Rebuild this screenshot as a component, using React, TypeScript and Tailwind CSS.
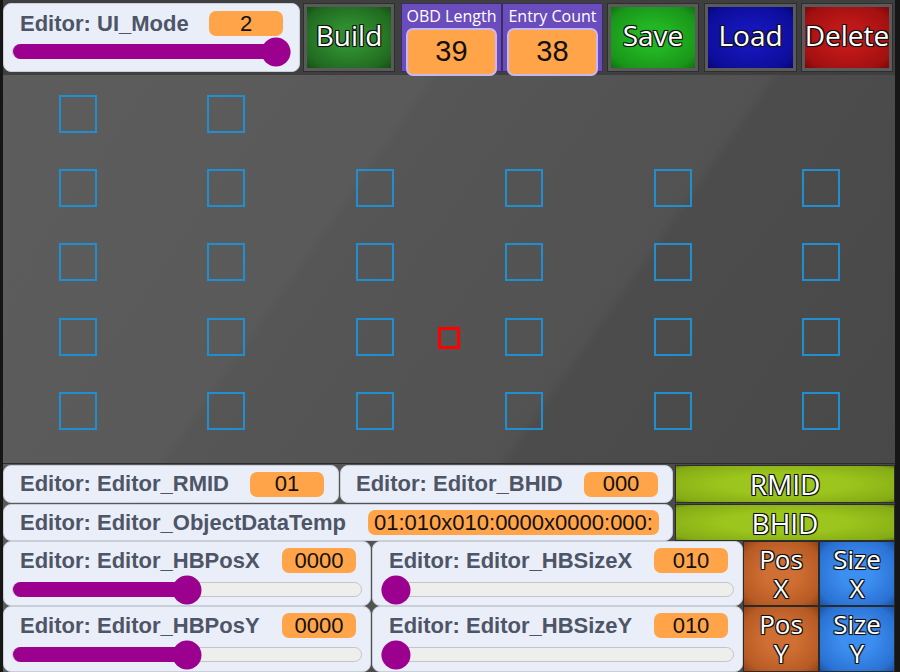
import React from 'react';

const outline =
  '[text-shadow:-1px_-1px_0_#111,1px_-1px_0_#111,-1px_1px_0_#111,1px_1px_0_#111,0_0_2px_#000]';

const cols = [56, 204, 353, 502, 651, 799];
const rows = [20, 94, 168, 243, 317];

function Pill({ value, className = '' }: { value: string; className?: string }) {
  return (
    <div
      className={`h-[25px] bg-[#ffa448] rounded-[7px] flex items-center justify-center text-[22px] text-[#111] font-['Liberation_Sans',sans-serif] leading-none ${className}`}
    >
      {value}
    </div>
  );
}

function Slider({ pct }: { pct: number }) {
  return (
    <div className="relative h-[15px] rounded-full bg-[#eeeeec] border border-[#c4c4c4]">
      <div className="absolute left-0 top-[-1px] bottom-[-1px] rounded-full bg-[#9c008f]" style={{ width: `${pct}%` }} />
      <div
        className="absolute top-1/2 w-[29px] h-[29px] -translate-y-1/2 -translate-x-1/2 rounded-full bg-[#9c008f]"
        style={{ left: `${pct}%` }}
      />
    </div>
  );
}

function Label({ children }: { children: React.ReactNode }) {
  return (
    <span className="text-[22px] font-bold text-[#4d5566] font-['Liberation_Sans',sans-serif] leading-none whitespace-nowrap">
      {children}
    </span>
  );
}

function BigButton({ label, bg, className = '' }: { label: string; bg: string; className?: string }) {
  return (
    <div className={`h-[69px] p-[3px] bg-[#5a5a5a] border border-[#2e2e2e] ${className}`}>
      <div
        className={`h-full w-full flex items-center justify-center pb-[6px] text-white text-[28px] font-['Open_Sans',sans-serif] ${outline} ${bg}`}
      >
        {label}
      </div>
    </div>
  );
}

function Counter({ label, value }: { label: string; value: string }) {
  return (
    <div className="w-[101px] h-[69px] bg-[#6a4cbd] border border-[#3a2d66] flex flex-col items-center px-[4px]">
      <div className="text-white text-[16px] leading-[24px] font-['Open_Sans',sans-serif] whitespace-nowrap">{label}</div>
      <div className="w-full flex-1 mb-[3px] bg-[#ffa448] border-2 border-[#c9b8f0] rounded-[7px] flex items-center justify-center text-[29px] text-[#111] font-['Liberation_Sans',sans-serif]">
        {value}
      </div>
    </div>
  );
}

function SliderPanel({ label, value, pct, className = '' }: { label: string; value: string; pct: number; className?: string }) {
  return (
    <div className={`bg-[#e9eef9] border border-[#c9ced8] rounded-[8px] flex flex-col px-[8px] pt-[6px] ${className}`}>
      <div className="flex items-center justify-between pl-[8px] pr-[6px]">
        <Label>{label}</Label>
        <Pill value={value} className="w-[74px]" />
      </div>
      <div className="mt-[9px]">
        <Slider pct={pct} />
      </div>
    </div>
  );
}

function GreenBar({ label }: { label: string }) {
  return (
    <div className="flex-1 bg-[#2e2e2e] p-[1px]">
      <div
        className={`h-full flex items-center justify-center text-white text-[28px] font-['Open_Sans',sans-serif] bg-[radial-gradient(ellipse_at_center,#9cc61d_40%,#84aa15_90%,#62800d_100%)] ${outline}`}
      >
        {label}
      </div>
    </div>
  );
}

function SquareButton({ top, bottom, bg }: { top: string; bottom: string; bg: string }) {
  return (
    <div
      className={`flex-1 flex items-center justify-center border border-[#2a2a2a] text-white text-[26px] leading-[29px] text-center font-['Open_Sans',sans-serif] ${outline} ${bg}`}
    >
      <p>
        {top}
        <br />
        {bottom}
      </p>
    </div>
  );
}

export default function App() {
  return (
    <div className="w-[900px] h-[672px] bg-[#161616] flex overflow-hidden">
      <div className="ml-[3px] w-[892px] h-full flex flex-col bg-[linear-gradient(125deg,#5d5d5d_0%,#5a5a5a_35%,#565656_36%,#525252_60%,#4c4c4c_61%,#474747_100%)]">
        {/* top bar */}
        <div className="h-[75px] flex items-start pt-[3px] bg-[#3f3f3f]">
          <div className="w-[297px] h-[69px] bg-[#e9eef9] border border-[#c9ced8] rounded-[8px] flex flex-col px-[8px] pt-[7px]">
            <div className="flex items-center justify-between pl-[8px] pr-[8px]">
              <Label>Editor: UI_Mode</Label>
              <Pill value="2" className="w-[74px]" />
            </div>
            <div className="mt-[8px]">
              <Slider pct={95} />
            </div>
          </div>
          <BigButton label="Build" bg="bg-[radial-gradient(ellipse_at_center,#2f8c2f_30%,#206a20_80%,#154d15_100%)]" className="w-[92px] ml-[3px]" />
          <div className="flex ml-[6px]">
            <Counter label="OBD Length" value="39" />
            <Counter label="Entry Count" value="38" />
          </div>
          <BigButton label="Save" bg="bg-[radial-gradient(ellipse_at_center,#23b523_30%,#199619_80%,#107010_100%)]" className="w-[92px] ml-[4px]" />
          <BigButton label="Load" bg="bg-[radial-gradient(ellipse_at_center,#1515b8_30%,#0d0d9a_80%,#070770_100%)]" className="w-[93px] ml-[5px]" />
          <BigButton label="Delete" bg="bg-[radial-gradient(ellipse_at_center,#c01818_30%,#a21010_80%,#7a0808_100%)]" className="w-[92px] ml-[4px]" />
        </div>

        {/* canvas */}
        <div className="relative flex-1 border-b border-[#2c2c2c]">
          {rows.map((y, ri) =>
            cols.map((x, ci) =>
              ri === 0 && ci > 1 ? null : (
                <div
                  key={`${ri}-${ci}`}
                  className="absolute w-[38px] h-[38px] border-2 border-[#1f8fd2]"
                  style={{ left: x, top: y }}
                />
              )
            )
          )}
          <div className="absolute left-[435px] top-[252px] w-[22px] h-[22px] border-[3px] border-[#ff0000]" />
        </div>

        {/* bottom panels */}
        <div className="flex flex-col pt-[1px]">
          <div className="flex h-[38px]">
            <div className="w-[336px] bg-[#e9eef9] border border-[#c9ced8] rounded-[8px] flex items-center justify-between pl-[16px] pr-[14px]">
              <Label>Editor: Editor_RMID</Label>
              <Pill value="01" className="w-[74px]" />
            </div>
            <div className="w-[333px] ml-[1px] bg-[#e9eef9] border border-[#c9ced8] rounded-[8px] flex items-center justify-between pl-[15px] pr-[14px]">
              <Label>Editor: Editor_BHID</Label>
              <Pill value="000" className="w-[74px]" />
            </div>
            <div className="flex-1 flex ml-[2px]">
              <GreenBar label="RMID" />
            </div>
          </div>
          <div className="flex h-[37px] mt-[1px]">
            <div className="w-[670px] bg-[#e9eef9] border border-[#c9ced8] rounded-[8px] flex items-center justify-between pl-[16px] pr-[13px]">
              <Label>Editor: Editor_ObjectDataTemp</Label>
              <Pill value="01:010x010:0000x0000:000:" className="w-[291px]" />
            </div>
            <div className="flex-1 flex ml-[2px]">
              <GreenBar label="BHID" />
            </div>
          </div>
          <div className="flex h-[65px]">
            <SliderPanel label="Editor: Editor_HBPosX" value="0000" pct={50} className="w-[368px]" />
            <SliderPanel label="Editor: Editor_HBSizeX" value="010" pct={4} className="w-[371px] ml-[1px]" />
            <div className="flex-1 flex">
              <SquareButton top="Pos" bottom="X" bg="bg-[radial-gradient(ellipse_at_center,#d06f33_30%,#b65a24_80%,#8e4216_100%)]" />
              <SquareButton top="Size" bottom="X" bg="bg-[radial-gradient(ellipse_at_center,#3c8ef0_30%,#2a72d4_80%,#1b52a6_100%)]" />
            </div>
          </div>
          <div className="flex h-[66px]">
            <SliderPanel label="Editor: Editor_HBPosY" value="0000" pct={50} className="w-[368px]" />
            <SliderPanel label="Editor: Editor_HBSizeY" value="010" pct={4} className="w-[371px] ml-[1px]" />
            <div className="flex-1 flex">
              <SquareButton top="Pos" bottom="Y" bg="bg-[radial-gradient(ellipse_at_center,#d06f33_30%,#b65a24_80%,#8e4216_100%)]" />
              <SquareButton top="Size" bottom="Y" bg="bg-[radial-gradient(ellipse_at_center,#3c8ef0_30%,#2a72d4_80%,#1b52a6_100%)]" />
            </div>
          </div>
        </div>
      </div>
    </div>
  );
}
